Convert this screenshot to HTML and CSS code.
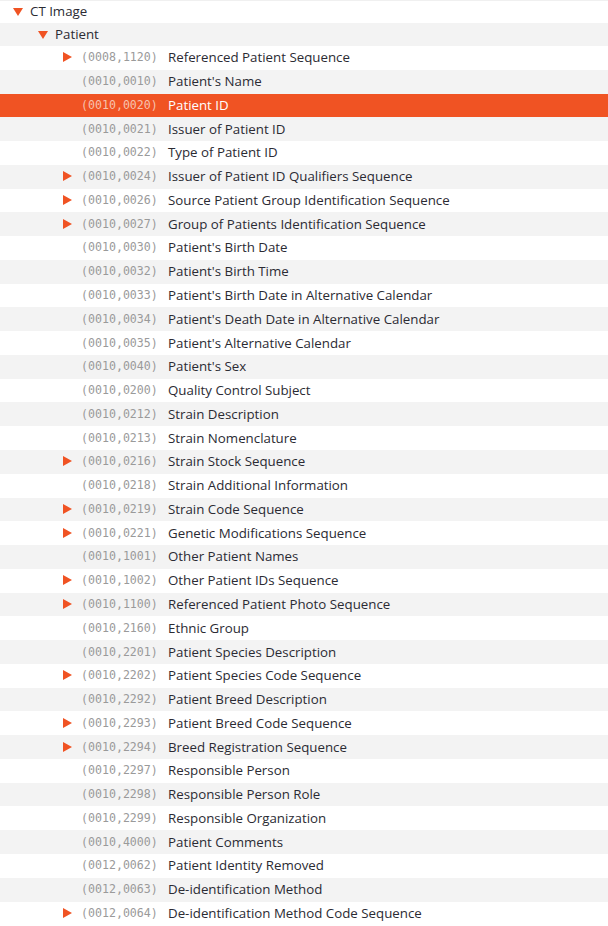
FILE: index.html
```html
<!DOCTYPE html>
<html>
<head>
<meta charset="utf-8">
<link rel="stylesheet" href="styles.css">
</head>
<body>
<div class="tree">
  <div class="row l0 first"><span class="tog down"></span><span class="name">CT Image</span></div>
  <div class="row l1 second"><span class="tog down"></span><span class="name">Patient</span></div>
  <div class="row l2"><span class="tog right"></span><span class="tag">(0008,1120)</span><span class="name">Referenced Patient Sequence</span></div>
  <div class="row l2"><span class="tog"></span><span class="tag">(0010,0010)</span><span class="name">Patient's Name</span></div>
  <div class="row l2 sel"><span class="tog"></span><span class="tag">(0010,0020)</span><span class="name">Patient ID</span></div>
  <div class="row l2"><span class="tog"></span><span class="tag">(0010,0021)</span><span class="name">Issuer of Patient ID</span></div>
  <div class="row l2"><span class="tog"></span><span class="tag">(0010,0022)</span><span class="name">Type of Patient ID</span></div>
  <div class="row l2"><span class="tog right"></span><span class="tag">(0010,0024)</span><span class="name">Issuer of Patient ID Qualifiers Sequence</span></div>
  <div class="row l2"><span class="tog right"></span><span class="tag">(0010,0026)</span><span class="name">Source Patient Group Identification Sequence</span></div>
  <div class="row l2"><span class="tog right"></span><span class="tag">(0010,0027)</span><span class="name">Group of Patients Identification Sequence</span></div>
  <div class="row l2"><span class="tog"></span><span class="tag">(0010,0030)</span><span class="name">Patient's Birth Date</span></div>
  <div class="row l2"><span class="tog"></span><span class="tag">(0010,0032)</span><span class="name">Patient's Birth Time</span></div>
  <div class="row l2"><span class="tog"></span><span class="tag">(0010,0033)</span><span class="name">Patient's Birth Date in Alternative Calendar</span></div>
  <div class="row l2"><span class="tog"></span><span class="tag">(0010,0034)</span><span class="name">Patient's Death Date in Alternative Calendar</span></div>
  <div class="row l2"><span class="tog"></span><span class="tag">(0010,0035)</span><span class="name">Patient's Alternative Calendar</span></div>
  <div class="row l2"><span class="tog"></span><span class="tag">(0010,0040)</span><span class="name">Patient's Sex</span></div>
  <div class="row l2"><span class="tog"></span><span class="tag">(0010,0200)</span><span class="name">Quality Control Subject</span></div>
  <div class="row l2"><span class="tog"></span><span class="tag">(0010,0212)</span><span class="name">Strain Description</span></div>
  <div class="row l2"><span class="tog"></span><span class="tag">(0010,0213)</span><span class="name">Strain Nomenclature</span></div>
  <div class="row l2"><span class="tog right"></span><span class="tag">(0010,0216)</span><span class="name">Strain Stock Sequence</span></div>
  <div class="row l2"><span class="tog"></span><span class="tag">(0010,0218)</span><span class="name">Strain Additional Information</span></div>
  <div class="row l2"><span class="tog right"></span><span class="tag">(0010,0219)</span><span class="name">Strain Code Sequence</span></div>
  <div class="row l2"><span class="tog right"></span><span class="tag">(0010,0221)</span><span class="name">Genetic Modifications Sequence</span></div>
  <div class="row l2"><span class="tog"></span><span class="tag">(0010,1001)</span><span class="name">Other Patient Names</span></div>
  <div class="row l2"><span class="tog right"></span><span class="tag">(0010,1002)</span><span class="name">Other Patient IDs Sequence</span></div>
  <div class="row l2"><span class="tog right"></span><span class="tag">(0010,1100)</span><span class="name">Referenced Patient Photo Sequence</span></div>
  <div class="row l2"><span class="tog"></span><span class="tag">(0010,2160)</span><span class="name">Ethnic Group</span></div>
  <div class="row l2"><span class="tog"></span><span class="tag">(0010,2201)</span><span class="name">Patient Species Description</span></div>
  <div class="row l2"><span class="tog right"></span><span class="tag">(0010,2202)</span><span class="name">Patient Species Code Sequence</span></div>
  <div class="row l2"><span class="tog"></span><span class="tag">(0010,2292)</span><span class="name">Patient Breed Description</span></div>
  <div class="row l2"><span class="tog right"></span><span class="tag">(0010,2293)</span><span class="name">Patient Breed Code Sequence</span></div>
  <div class="row l2"><span class="tog right"></span><span class="tag">(0010,2294)</span><span class="name">Breed Registration Sequence</span></div>
  <div class="row l2"><span class="tog"></span><span class="tag">(0010,2297)</span><span class="name">Responsible Person</span></div>
  <div class="row l2"><span class="tog"></span><span class="tag">(0010,2298)</span><span class="name">Responsible Person Role</span></div>
  <div class="row l2"><span class="tog"></span><span class="tag">(0010,2299)</span><span class="name">Responsible Organization</span></div>
  <div class="row l2"><span class="tog"></span><span class="tag">(0010,4000)</span><span class="name">Patient Comments</span></div>
  <div class="row l2"><span class="tog"></span><span class="tag">(0012,0062)</span><span class="name">Patient Identity Removed</span></div>
  <div class="row l2"><span class="tog"></span><span class="tag">(0012,0063)</span><span class="name">De-identification Method</span></div>
  <div class="row l2"><span class="tog right"></span><span class="tag">(0012,0064)</span><span class="name">De-identification Method Code Sequence</span></div>
</div>
</body>
</html>
```
FILE: styles.css
```css
html, body {
  margin: 0;
  padding: 0;
  background: #ffffff;
}
.tree {
  font-family: "Open Sans", "Noto Sans", sans-serif;
  font-size: 13.3px;
  color: #2b2b33;
}
.row {
  display: flex;
  align-items: center;
  box-sizing: border-box;
  height: 23.78px;
  padding-bottom: 1px;
  white-space: nowrap;
}
.row.first {
  height: 22.8px;
  box-shadow: inset 0 1px 0 #f0f0f0;
}
.row.second {
  height: 23.2px;
}
.row:nth-child(even) {
  background: #f3f3f3;
}
.row.sel {
  background: #f05323;
  color: #ffffff;
}
.row.sel .tag {
  color: #f7c2ae;
}
.l0 { padding-left: 13px; }
.l1 { padding-left: 38px; }
.l2 { padding-left: 63px; }
.tog {
  width: 10px;
  height: 10px;
  flex: none;
  margin-right: 7px;
  position: relative;
}
.tog.down::before {
  content: "";
  position: absolute;
  left: 0;
  top: 2px;
  border-left: 5px solid transparent;
  border-right: 5px solid transparent;
  border-top: 8px solid #f05323;
}
.tog.right::before {
  content: "";
  position: absolute;
  left: 0;
  top: 0;
  border-top: 5px solid transparent;
  border-bottom: 5px solid transparent;
  border-left: 9px solid #f05323;
}
.l2 .tog { margin-right: 8px; }
.tag {
  font-family: "DejaVu Sans Mono", "Liberation Mono", monospace;
  font-size: 11.6px;
  color: #9a9a9a;
  width: 77px;
  margin-right: 10px;
  flex: none;
}
.name {
  flex: none;
}
```
